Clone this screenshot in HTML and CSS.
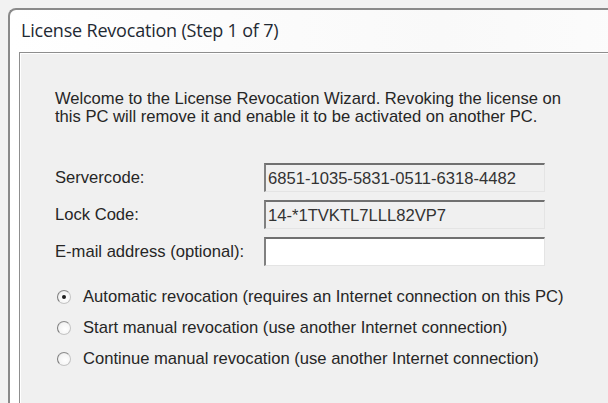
FILE: index.html
```html
<!DOCTYPE html>
<html lang="en">
<head>
    <meta charset="UTF-8">
    <title>License Revocation (Step 1 of 7)</title>
    <link rel="stylesheet" href="styles.css">
</head>
<body>
    <div class="window">
        <div class="title">License Revocation (Step 1 of 7)</div>

        <div class="panel">
            <p class="intro">
                Welcome to the License Revocation Wizard. Revoking the license on<br>
                this PC will remove it and enable it to be activated on another PC.
            </p>

            <div class="fields">
                <div class="field-row">
                    <span class="label">Servercode:</span>
                    <div class="input readonly">6851-1035-5831-0511-6318-4482</div>
                </div>
                <div class="field-row">
                    <span class="label">Lock Code:</span>
                    <div class="input readonly">14-*1TVKTL7LLL82VP7</div>
                </div>
                <div class="field-row">
                    <span class="label">E-mail address (optional):</span>
                    <div class="input"></div>
                </div>
            </div>

            <div class="options">
                <div class="option">
                    <span class="radio checked"></span>
                    Automatic revocation (requires an Internet connection on this PC)
                </div>
                <div class="option">
                    <span class="radio"></span>
                    Start manual revocation (use another Internet connection)
                </div>
                <div class="option">
                    <span class="radio"></span>
                    Continue manual revocation (use another Internet connection)
                </div>
            </div>
        </div>
    </div>
</body>
</html>
```

FILE: styles.css
```css
* {
    margin: 0;
    padding: 0;
    box-sizing: border-box;
}

body {
    background: #f2f2f2;
    font-family: 'Liberation Sans', Arial, sans-serif;
    color: #262626;
    overflow: hidden;
    height: 100vh;
}

.window {
    margin: 8px 0 0 8px;
    width: 720px;
    height: 460px;
    border-top: 2px solid #8a8a8a;
    border-left: 2px solid #8a8a8a;
    border-top-left-radius: 8px;
    background: linear-gradient(90deg, #ffffff 0%, #f9f9f9 60%, #fdfdfd 100%);
}

.title {
    height: 42px;
    padding: 8px 0 0 11px;
    font-family: 'Open Sans', 'Noto Sans', sans-serif;
    font-size: 18px;
    letter-spacing: -0.2px;
    color: #1f2a33;
}

.panel {
    margin-left: 9px;
    height: 420px;
    border-top: 1px solid #8e8e8e;
    border-left: 1px solid #8e8e8e;
    box-shadow: inset 1px 1px 0 #ffffff;
    background: #f0f0f0;
    padding: 37px 0 0 35px;
    font-size: 16.6px;
}

.intro {
    line-height: 18px;
}

.fields {
    display: flex;
    flex-direction: column;
    gap: 8px;
    margin-top: 37px;
}

.field-row {
    display: flex;
    align-items: center;
    height: 29px;
}

.label {
    width: 209px;
}

.input {
    width: 281px;
    height: 29px;
    border-top: 2px solid #707070;
    border-left: 2px solid #808080;
    border-right: 1px solid #e4e4e4;
    border-bottom: 1px solid #e4e4e4;
    background: #ffffff;
    padding: 4px 0 0 2px;
    color: #333;
}

.input.readonly {
    background: #f0f0f0;
}

.options {
    display: flex;
    flex-direction: column;
    gap: 13px;
    margin-top: 22px;
}

.option {
    display: flex;
    align-items: center;
    height: 18px;
    margin-left: 2px;
}

.radio {
    position: relative;
    width: 14px;
    height: 14px;
    margin-right: 12px;
    border-radius: 50%;
    border: 1px solid #c4c4c4;
    border-left-color: #7a7a7a;
    border-top-color: #8a8a8a;
    background: radial-gradient(circle at 60% 60%, #ffffff 0%, #f4f4f4 60%, #dcdcdc 100%);
}

.radio.checked::after {
    content: "";
    position: absolute;
    top: 4px;
    left: 4px;
    width: 4px;
    height: 4px;
    border-radius: 50%;
    background: #1e1e1e;
}
```
